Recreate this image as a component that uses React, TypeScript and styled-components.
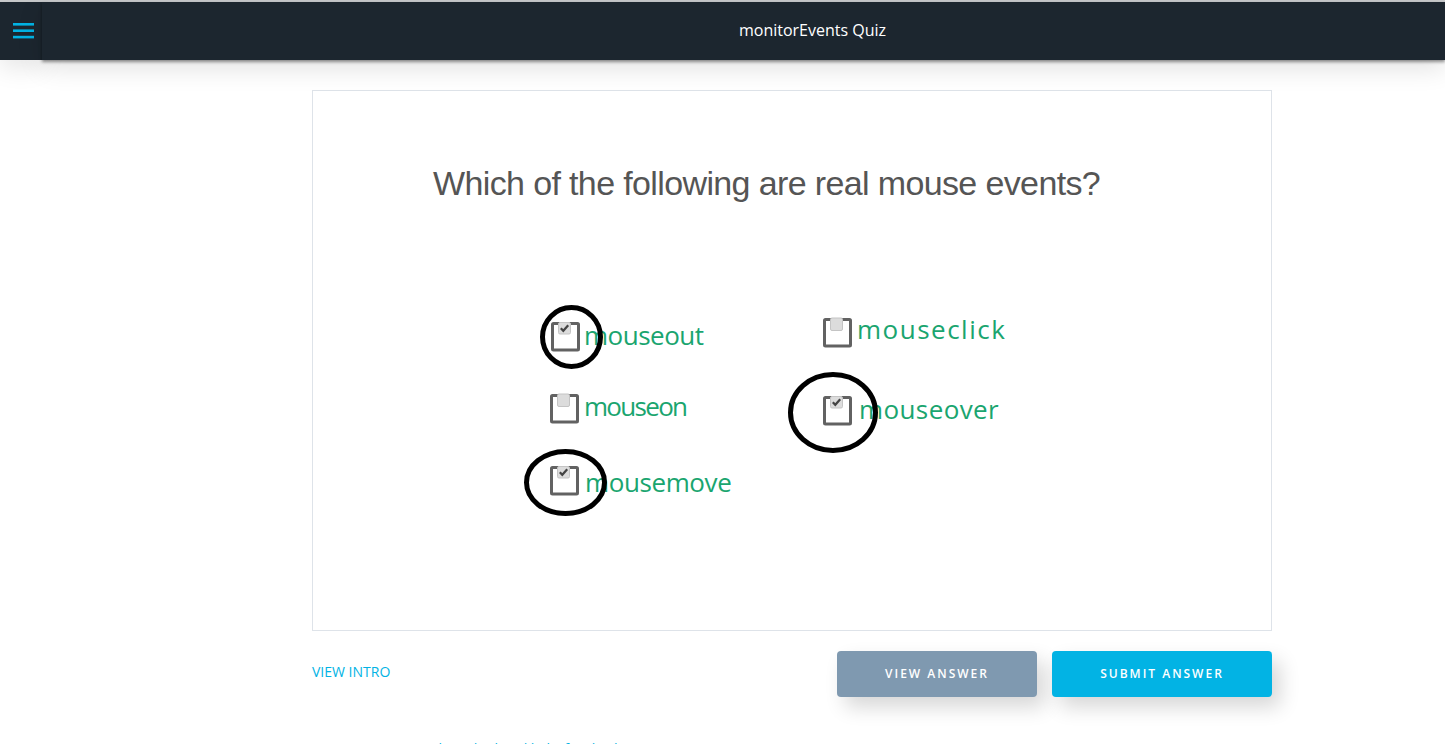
import React from "react";
import styled, { createGlobalStyle } from "styled-components";

const Global = createGlobalStyle`
  html, body { margin: 0; padding: 0; background: #fff; height: 744px; overflow: hidden; }
  body { font-family: "Open Sans", "Noto Sans", sans-serif; }
  * { box-sizing: border-box; }
`;

const Page = styled.div`
  display: flex;
  flex-direction: column;
  height: 744px;
  overflow: hidden;
`;

const Header = styled.header`
  display: flex;
  height: 60px;
  flex: none;
  border-top: 2px solid #c9cbcd;
  background: #1c262f;
`;

const MenuPane = styled.div`
  width: 42px;
  flex: none;
  display: flex;
  align-items: center;
  padding-left: 13px;
  padding-bottom: 1px;
  background: #1c262f;
  box-shadow: 0 8px 24px rgba(0, 0, 0, 0.1);
`;

const TitleBar = styled.div`
  flex: 1;
  display: flex;
  align-items: center;
  justify-content: center;
  padding-left: 138px;
  padding-bottom: 2px;
  background: #1c262f;
  position: relative;
  z-index: 1;
  box-shadow: 0 2px 3px rgba(0, 0, 0, 0.42), 0 8px 26px rgba(0, 0, 0, 0.12);
`;

const Title = styled.h1`
  margin: 0;
  color: #fff;
  font-size: 16px;
  font-weight: 400;
  line-height: 22px;
`;

const Main = styled.main`
  width: 960px;
  margin: 30px 0 0 312px;
  flex: none;
`;

const QuizCard = styled.section`
  position: relative;
  height: 541px;
  border: 1px solid #dee3e9;
  background: #fff;
  overflow: hidden;
`;

const Question = styled.div`
  position: absolute;
  left: 120px;
  top: 68px;
  color: #555;
  font-family: "Liberation Sans", sans-serif;
  font-size: 34px;
  line-height: 48px;
  letter-spacing: -0.63px;
  white-space: nowrap;
`;

const Label = styled.div<{ $x: number; $y: number; $spacing: number }>`
  position: absolute;
  left: ${(p) => p.$x}px;
  top: ${(p) => p.$y}px;
  color: #1aa56f;
  font-family: "Open Sans", sans-serif;
  font-size: 26px;
  font-weight: 500;
  line-height: 36px;
  letter-spacing: ${(p) => p.$spacing}px;
  white-space: nowrap;
`;

const BoxIcon = styled.svg<{ $x: number; $y: number }>`
  position: absolute;
  left: ${(p) => p.$x}px;
  top: ${(p) => p.$y}px;
`;

const Ring = styled.svg<{ $x: number; $y: number }>`
  position: absolute;
  left: ${(p) => p.$x}px;
  top: ${(p) => p.$y}px;
  overflow: visible;
`;

const Actions = styled.div`
  display: flex;
  align-items: center;
  margin-top: 20px;
  gap: 15px;
`;

const IntroLink = styled.a`
  margin-right: auto;
  color: #02b3e4;
  font-size: 14px;
  line-height: 20px;
  font-weight: 400;
  position: relative;
  top: -2px;
`;

const ActionButton = styled.button<{ $wide?: boolean; $muted?: boolean }>`
  width: ${(p) => (p.$wide ? 220 : 200)}px;
  height: 46px;
  border: 0;
  border-radius: 4px;
  padding: 0 0 2px;
  background: ${(p) => (p.$muted ? "#7f99b0" : "#02b3e4")};
  color: #fff;
  font-family: "Open Sans", sans-serif;
  font-size: 12px;
  font-weight: 600;
  letter-spacing: 2px;
  box-shadow: 8px 10px 20px rgba(0, 0, 0, 0.16);
`;

const Notes = styled.p`
  margin: 42px 0 0;
  color: #02b3e4;
  font-size: 14px;
  line-height: 20px;
  white-space: nowrap;
`;

const Checkbox = ({ x, y, checked }: { x: number; y: number; checked?: boolean }) => (
  <BoxIcon $x={x} $y={y} width="30" height="32" viewBox="0 0 30 32" aria-hidden="true">
    <rect x="1.5" y="2.5" width="26" height="26.5" rx="1" fill="#fff" stroke="#626262" strokeWidth="3" />
    <rect x="7.5" y={checked ? 1.5 : 1} width="12" height={checked ? 11.5 : 12.5} rx="1.5" fill="#dcdcdc" stroke="#c4c4c4" strokeWidth="1" />
    {checked && <path d="M9.8 7.2 L12.3 9.8 L17.2 4.2" fill="none" stroke="#444" strokeWidth="2.2" />}
  </BoxIcon>
);

const Circle = ({ x, y, w, h }: { x: number; y: number; w: number; h: number }) => (
  <Ring $x={x} $y={y} width={w} height={h} viewBox={`0 0 ${w} ${h}`} aria-hidden="true">
    <ellipse cx={w / 2} cy={h / 2} rx={w / 2 - 2.5} ry={h / 2 - 2.5} fill="none" stroke="#000" strokeWidth="5" />
  </Ring>
);

const ox = 313;
const oy = 91;

const options = [
  { text: "mouseout", x: 584, y: 317, spacing: -0.5, bx: 551, by: 321, checked: true },
  { text: "mouseon", x: 584, y: 388, spacing: -1.7, bx: 550, by: 393, checked: false },
  { text: "mousemove", x: 585, y: 464, spacing: -0.4, bx: 550, by: 465, checked: true },
  { text: "mouseclick", x: 857, y: 311, spacing: 1.5, bx: 823, by: 317, checked: false },
  { text: "mouseover", x: 859, y: 391, spacing: 0.4, bx: 823, by: 395, checked: true },
];

const rings = [
  { x: 540, y: 305, w: 63, h: 64 },
  { x: 788, y: 372, w: 90, h: 81 },
  { x: 524, y: 449, w: 83, h: 67 },
];

export default function App() {
  return (
    <Page>
      <Global />
      <Header>
        <MenuPane>
          <svg width="21" height="16" viewBox="0 0 21 16" aria-label="Menu">
            <rect y="0" width="21" height="2.6" fill="#02b3e4" />
            <rect y="6.4" width="21" height="2.6" fill="#02b3e4" />
            <rect y="12.8" width="21" height="2.6" fill="#02b3e4" />
          </svg>
        </MenuPane>
        <TitleBar>
          <Title>monitorEvents Quiz</Title>
        </TitleBar>
      </Header>
      <Main>
        <QuizCard>
          <Question>Which of the following are real mouse events?</Question>
          {options.map((o) => (
            <React.Fragment key={o.text}>
              <Checkbox x={o.bx - ox} y={o.by - oy} checked={o.checked} />
              <Label $x={o.x - ox} $y={o.y - oy} $spacing={o.spacing}>
                {o.text}
              </Label>
            </React.Fragment>
          ))}
          {rings.map((r) => (
            <Circle key={r.x} x={r.x - ox} y={r.y - oy} w={r.w} h={r.h} />
          ))}
        </QuizCard>
        <Actions>
          <IntroLink>VIEW INTRO</IntroLink>
          <ActionButton $muted>VIEW ANSWER</ActionButton>
          <ActionButton $wide>SUBMIT ANSWER</ActionButton>
        </Actions>
        <Notes>Supporting materials and related links for this lesson</Notes>
      </Main>
    </Page>
  );
}
